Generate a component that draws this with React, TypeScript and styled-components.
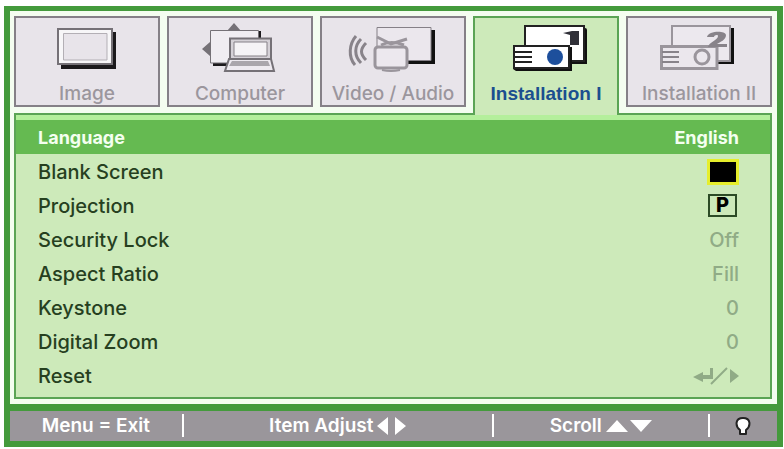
import React, { useState } from "react";
import styled, { createGlobalStyle, css } from "styled-components";

const color = {
  frame: "#449a3c",
  edge: "#5ba455",
  panel: "#cdeaba",
  glow: "#b4ef9c",
  selected: "#65ba51",
  tab: "#e8e4ea",
  tabEdge: "#858087",
  tabText: "#9b969d",
  active: "#1b4f8f",
  text: "#26401f",
  muted: "#90ab86",
  bar: "#9a969b",
};

const GlobalStyle = createGlobalStyle`
  * { box-sizing: border-box; }
  body { margin: 0; background: #fff; font-family: Inter, "Liberation Sans", sans-serif; }
  button { font: inherit; color: inherit; border: 0; padding: 0; background: none; cursor: pointer; }
`;

const Menu = styled.main`
  margin: 6px 1px 3px 4px;
  border: solid ${color.frame};
  border-width: 5px 6px 6px;
  background: ${color.frame};
  font-size: 19px;
  line-height: 20px;
  font-weight: 500;
`;

const Screen = styled.div`
  padding: 5px 5px 5px 4px;
  background: #f4fdf0;
`;

const Tabs = styled.div`
  display: grid;
  grid-template-columns: repeat(5, 1fr);
  gap: 7px;
`;

const Tab = styled.button<{ $active: boolean }>`
  display: flex;
  flex-direction: column;
  align-items: center;
  justify-content: flex-start;
  gap: 10px;
  min-width: 0;
  white-space: nowrap;
  padding: 4px 0 1px;
  margin-bottom: 6px;
  border: 2px solid ${color.tabEdge};
  background: ${color.tab};
  color: ${color.tabText};
  ${(p) =>
    p.$active &&
    css`
      position: relative;
      margin-bottom: -2px;
      border-color: ${color.edge};
      border-bottom: 0;
      background: ${color.panel};
      color: ${color.active};
      font-family: "Liberation Sans", sans-serif;
      font-weight: 700;
    `}
`;

const Panel = styled.section`
  padding: 5px 0;
  border: 2px solid ${color.edge};
  background: linear-gradient(${color.glow} 5px, ${color.panel} 5px);
`;

const Rows = styled.ul`
  margin: 0;
  padding: 0;
  list-style: none;
`;

const Row = styled.button<{ $selected: boolean }>`
  display: flex;
  width: 100%;
  height: 34px;
  align-items: center;
  justify-content: space-between;
  padding: 1px 31px 0 22px;
  font-size: 20px;
  color: ${color.text};
  ${(p) =>
    p.$selected &&
    css`
      font-size: 18px;
      font-weight: 700;
      color: #f4fff0;
      background: ${color.selected};
    `}
`;

const Value = styled.span<{ $muted?: boolean }>`
  display: flex;
  color: ${(p) => (p.$muted ? color.muted : "inherit")};
`;

const Swatch = styled.span`
  width: 32px;
  height: 26px;
  border: 3px solid #e6ee2c;
  background: #000;
`;

const Badge = styled.span`
  width: 29px;
  height: 23px;
  margin-right: 2px;
  border: 2px solid #2c4b26;
  color: #000;
  font-weight: 800;
  line-height: 19px;
  text-align: center;
`;

const Footer = styled.footer`
  display: grid;
  grid-template-columns: 171fr 309fr 215fr 69fr;
  align-items: center;
  margin-top: 7px;
  padding: 3px 0 4px;
  background: ${color.bar};
  color: #fff;
`;

const Hint = styled.div`
  display: flex;
  align-items: center;
  justify-content: center;
  gap: 4px;
  height: 23px;
  white-space: nowrap;
  font-weight: 600;
  & + & {
    border-left: 2px solid #fff;
  }
`;

function TabIcon({ children }: { children: React.ReactNode }) {
  return (
    <svg width="90" height="52" viewBox="0 0 90 52" fill="none" aria-hidden="true">
      {children}
    </svg>
  );
}

const ImageIcon = () => (
  <TabIcon>
    <path d="M19 10H74V47H19Z" fill="#1b191c" />
    <path d="M16 7H70V42H16Z" fill="#f7f6f8" stroke="#757177" strokeWidth="2" />
    <path d="M21.500 11.500H65V38H21.500Z" fill="#e8e4ea" stroke="#b3afb5" />
  </TabIcon>
);

const ComputerIcon = () => (
  <TabIcon>
    <path d="M18 40H33V44H18ZM62 9H66V17H62Z" fill="#1b191c" />
    <path d="M15.500 8.500H63.500V41H15.500Z" fill="#f0edf2" stroke="#757177" />
    <path d="M39 1L46 9H32ZM7 27L15 20V34Z" fill="#757177" />
    <path d="M35 16.500H76V37H35Z" fill="#d5d1d7" stroke="#757177" strokeWidth="2" />
    <path d="M39 20H72V34H39Z" fill="#f5f3f6" stroke="#858087" />
    <path d="M34 37H76L79 49H30Z" fill="#eeeaf0" stroke="#757177" strokeWidth="2" />
    <path d="M37 39H73L75 44H34Z" fill="#aaa6ac" />
  </TabIcon>
);

const VideoIcon = () => (
  <TabIcon>
    <path d="M83 8H87V42H57V38H83Z" fill="#111" />
    <path d="M29 5.500H83V38.500H29Z" fill="#ebe7ed" stroke="#858087" />
    <path
      d="M8 14C1 22 0 35 7 43M13 17C6 24 6 34 13 41M18 21C12 27 12 32 18 38"
      stroke="#88838a"
      strokeWidth="3"
    />
    <path d="M29 15L43 22L59 17" stroke="#9a959c" strokeWidth="3" />
    <path d="M33 23Q43 18 56 23" stroke="#9a959c" strokeWidth="3" />
    <rect x="27" y="25" width="32" height="21" rx="3" fill="#ece8ee" stroke="#9a959c" strokeWidth="3" />
    <path d="M34 48Q43 50 52 48" stroke="#9a959c" strokeWidth="2" />
  </TabIcon>
);

const InstallOneIcon = () => (
  <TabIcon>
    <path d="M26 6H84Q86 6 86 8V42H26Z" fill="#111" />
    <path d="M24 4H83V39H24Z" fill="#fff" stroke="#222" strokeWidth="2" />
    <path d="M62 11L71 9H78V23H69V13Z" fill="#303038" />
    <path d="M13 25H71V49H15L12 47Z" fill="#111" />
    <path d="M13 24H68V46H13Z" fill="#fff" stroke="#222" strokeWidth="2" />
    <path d="M12 30H31M12 35H31M12 40H31" stroke="#222" strokeWidth="2" />
    <circle cx="54" cy="35" r="8" fill="#1d4f9c" />
  </TabIcon>
);

const InstallTwoIcon = () => (
  <TabIcon>
    <path d="M76 6H80V42H62V38H76Z" fill="#111" />
    <path d="M18 4H76V39H18Z" fill="#ece8ee" stroke="#9a959c" strokeWidth="2" />
    <path d="M7.500 24.500H63V46.500H7.500Z" fill="#ebe7ed" stroke="#9a959c" strokeWidth="3" />
    <path d="M53 15C54 9 71 8 72 13C72 18 66 20 63 22H73V25H54C55 20 64 18 64 14C64 12 60 13 60 15Z" fill="#88838a" />
    <path d="M8 30H25M8 35H25M8 40H25" stroke="#88838a" strokeWidth="2" />
    <circle cx="48" cy="35" r="7" stroke="#9a959c" strokeWidth="3" />
  </TabIcon>
);

const EnterIcon = () => (
  <svg width="46" height="18" viewBox="0 0 46 18" role="img" aria-label="Enter or right">
    <path d="M0 10L10 5V8H17V1H20V12H10V15Z" fill="currentColor" />
    <path d="M18 17L34 1" stroke="currentColor" strokeWidth="2" />
    <path d="M37 2L46 9L37 16Z" fill="currentColor" />
  </svg>
);

const LeftRight = () => (
  <svg width="29" height="18" viewBox="0 0 29 18" fill="#fff" aria-hidden="true">
    <path d="M11 0V18L0 9ZM18 0V18L29 9Z" />
  </svg>
);

const UpDown = () => (
  <svg width="46" height="12" viewBox="0 0 46 12" fill="#fff" aria-hidden="true">
    <path d="M0 12H22L11 0ZM24 0H46L35 12Z" />
  </svg>
);

const Bulb = () => (
  <svg width="16" height="20" viewBox="0 0 16 20" role="img" aria-label="Lamp">
    <path
      d="M5 18V14C0 10 0 2 8 2C16 2 16 10 11 14V18Z"
      fill="#fff"
      stroke="#222"
      strokeWidth="2"
      strokeLinejoin="round"
    />
  </svg>
);

const tabs = [
  { name: "Image", Icon: ImageIcon },
  { name: "Computer", Icon: ComputerIcon },
  { name: "Video / Audio", Icon: VideoIcon },
  { name: "Installation I", Icon: InstallOneIcon },
  { name: "Installation II", Icon: InstallTwoIcon },
];

const settings: { name: string; value: React.ReactNode; muted?: boolean }[] = [
  { name: "Language", value: "English" },
  { name: "Blank Screen", value: <Swatch role="img" aria-label="Black" /> },
  { name: "Projection", value: <Badge>P</Badge> },
  { name: "Security Lock", value: "Off", muted: true },
  { name: "Aspect Ratio", value: "Fill", muted: true },
  { name: "Keystone", value: "0", muted: true },
  { name: "Digital Zoom", value: "0", muted: true },
  { name: "Reset", value: <EnterIcon />, muted: true },
];

export default function App() {
  const [tab, setTab] = useState("Installation I");
  const [row, setRow] = useState("Language");
  return (
    <>
      <GlobalStyle />
      <Menu>
        <Screen>
          <Tabs role="tablist">
            {tabs.map(({ name, Icon }) => (
              <Tab
                key={name}
                role="tab"
                aria-selected={tab === name}
                $active={tab === name}
                onClick={() => setTab(name)}
              >
                <Icon />
                <span>{name}</span>
              </Tab>
            ))}
          </Tabs>
          <Panel role="tabpanel" aria-label={tab}>
            <Rows>
              {settings.map((s) => (
                <li key={s.name}>
                  <Row $selected={row === s.name} onClick={() => setRow(s.name)}>
                    <span>{s.name}</span>
                    <Value $muted={s.muted}>{s.value}</Value>
                  </Row>
                </li>
              ))}
            </Rows>
          </Panel>
        </Screen>
        <Footer>
          <Hint>Menu = Exit</Hint>
          <Hint>
            Item Adjust <LeftRight />
          </Hint>
          <Hint>
            Scroll <UpDown />
          </Hint>
          <Hint>
            <Bulb />
          </Hint>
        </Footer>
      </Menu>
    </>
  );
}
